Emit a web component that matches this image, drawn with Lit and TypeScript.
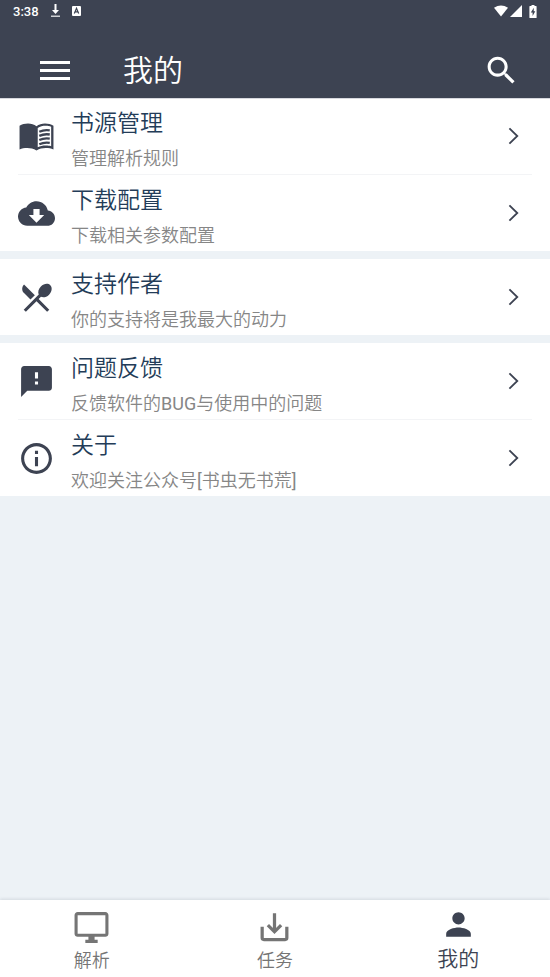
import { LitElement, html, css, svg } from "lit";
import { customElement } from "lit/decorators.js";

const icons: Record<string, unknown> = {
  book: svg`<path fill-rule="evenodd" d="M12 5.300C10.500 4 8.500 3.500 6.500 3.500C4.500 3.500 2.500 4 1 5V20.400C2.500 19.800 4 19.500 6 19.500C8.200 19.500 10 20 12 21C14 20 15.800 19.500 18 19.500C20 19.500 21.500 19.800 23 20.400V5C21.500 4 19.500 3.500 17.500 3.500C15.500 3.500 13.500 4 12 5.300ZM12.800 6.500C14.300 5.400 16 5 18 5C19.400 5 20.500 5.200 21.500 5.600V18.300C20.500 18 19.400 17.900 18 17.900C16 17.900 14.300 18.300 12.800 19Z"/><path fill="none" stroke="currentColor" stroke-width="1.500" d="M13.800 8.900Q17 7.400 20.600 8M13.800 11.600Q17 10.100 20.600 10.700M13.800 14.300Q17 12.800 20.600 13.400M13.800 17Q17 15.500 20.600 16.100"/>`,
  cloud: svg`<path d="M19.350 10.040C18.670 6.590 15.640 4 12 4 9.110 4 6.600 5.640 5.350 8.040 2.340 8.360 0 10.910 0 14c0 3.310 2.690 6 6 6h13c2.760 0 5-2.240 5-5 0-2.640-2.050-4.780-4.650-4.960zM17 13l-5 5-5-5h3V9h4v4h3z"/>`,
  dining: svg`<path d="M8.100 13.340l2.830-2.830L3.910 3.500c-1.560 1.560-1.560 4.090 0 5.660l4.190 4.180zm6.780-1.810c1.530.710 3.680.210 5.270-1.380 1.910-1.910 2.280-4.650.810-6.120-1.460-1.460-4.200-1.100-6.120.810-1.590 1.590-2.090 3.740-1.380 5.270L3.700 19.870l1.410 1.410L12 14.410l6.880 6.880 1.410-1.410L13.410 13l1.470-1.470z"/>`,
  feedback: svg`<path d="M20 2H4c-1.100 0-1.990.9-1.990 2L2 22l4-4h14c1.100 0 2-.9 2-2V4c0-1.100-.9-2-2-2zm-7 12h-2v-2h2v2zm0-4h-2V6h2v4z"/>`,
  info: svg`<path d="M11 17h2v-6h-2v6zm1-15C6.480 2 2 6.480 2 12s4.480 10 10 10 10-4.480 10-10S17.520 2 12 2zm0 18c-4.410 0-8-3.590-8-8s3.590-8 8-8 8 3.590 8 8-3.590 8-8 8zM11 9h2V7h-2v2z"/>`,
  desktop: svg`<path d="M21 2H3c-1.100 0-2 .9-2 2v12c0 1.100.9 2 2 2h7v2H8v2h8v-2h-2v-2h7c1.100 0 2-.9 2-2V4c0-1.100-.9-2-2-2zm0 14H3V4h18v12z"/>`,
  tray: svg`<path fill="none" stroke="currentColor" stroke-width="2.100" d="M12 2.800V15M7.700 10.500L12 14.800L16.300 10.500M4 11.500V18.700Q4 19.800 5.100 19.800H18.900Q20 19.800 20 18.700V11.500"/>`,
  person: svg`<path d="M12 12c2.210 0 4-1.790 4-4s-1.790-4-4-4-4 1.790-4 4 1.790 4 4 4zm0 2c-2.670 0-8 1.340-8 4v2h16v-2c0-2.660-5.330-4-8-4z"/>`,
  search: svg`<path d="M15.500 14h-.79l-.28-.27C15.410 12.590 16 11.110 16 9.500 16 5.910 13.090 3 9.500 3S3 5.910 3 9.500 5.910 16 9.500 16c1.610 0 3.090-.59 4.230-1.570l.27.280v.79l5 4.990L20.490 19l-4.990-5zm-6 0C7.010 14 5 11.990 5 9.500S7.010 5 9.500 5 14 7.010 14 9.500 11.990 14 9.500 14z"/>`,
};

const icon = (name: string) =>
  html`<svg class="icon" viewBox="0 0 24 24" aria-hidden="true">${icons[name]}</svg>`;

/* Latin runs take the regular weight, since light Roboto is paler than the light CJK face. */
const mixed = (text: string) =>
  text
    .split(/([\x21-\x7e]+)/)
    .filter(Boolean)
    .map((run) => (/^[\x21-\x7e]/.test(run) ? html`<span class="latin">${run}</span>` : run));

interface Entry {
  icon: string;
  title: string;
  note: string;
}

const groups: Entry[][] = [
  [
    { icon: "book", title: "书源管理", note: "管理解析规则" },
    { icon: "cloud", title: "下载配置", note: "下载相关参数配置" },
  ],
  [{ icon: "dining", title: "支持作者", note: "你的支持将是我最大的动力" }],
  [
    { icon: "feedback", title: "问题反馈", note: "反馈软件的BUG与使用中的问题" },
    { icon: "info", title: "关于", note: "欢迎关注公众号[书虫无书荒]" },
  ],
];

const tabs = [
  { icon: "desktop", label: "解析" },
  { icon: "tray", label: "任务" },
  { icon: "person", label: "我的", active: true },
];

@customElement("app-root")
export class AppRoot extends LitElement {
  static styles = css`
    :host {
      display: flex;
      flex-direction: column;
      min-height: 100vh;
      background: #edf2f6;
      color: #3d4352;
      font-family: Roboto, "Noto Sans CJK SC", sans-serif;
      font-weight: 350;
    }
    * {
      box-sizing: border-box;
    }
    button {
      border: 0;
      padding: 0;
      background: none;
      color: inherit;
      font: inherit;
      text-align: left;
    }
    svg {
      display: block;
      flex: none;
    }
    .icon {
      width: 37px;
      height: 37px;
      fill: currentColor;
    }
    .top {
      position: relative;
      background: #3d4352;
      box-shadow: 0 1px 0 #d7d8de;
      color: #fff;
    }
    .status {
      display: flex;
      align-items: center;
      justify-content: space-between;
      height: 22px;
      padding: 0 13px;
      font-size: 13px;
      font-weight: 500;
    }
    .side {
      display: flex;
      align-items: center;
      gap: 11px;
    }
    .signals {
      gap: 2px;
    }
    .battery {
      margin-left: 5px;
    }
    .bar {
      display: flex;
      align-items: center;
      height: 76px;
      padding: 20px 30px 0 40px;
    }
    .bar h1 {
      flex: 1;
      margin: 0 0 0 53px;
      padding-top: 2px;
      font-size: 30px;
      font-weight: inherit;
      line-height: 40px;
    }
    main {
      flex: 1;
      display: flex;
      flex-direction: column;
      gap: 8px;
    }
    .group {
      margin: 0;
      padding: 0;
      list-style: none;
      background: #fff;
    }
    .group li + li::before {
      content: "";
      display: block;
      height: 1px;
      margin: 0 18px;
      background: #f3f4f6;
    }
    .row {
      display: flex;
      align-items: center;
      gap: 16px;
      width: 100%;
      height: 76px;
      padding: 0 31px 0 18px;
    }
    .words {
      flex: 1;
      padding-top: 5px;
    }
    .title,
    .note {
      display: block;
    }
    .title {
      color: #233c58;
      font-size: 23px;
      line-height: 40px;
    }
    .note {
      color: #868686;
      font-size: 18px;
      line-height: 30px;
    }
    .latin {
      font-weight: 400;
    }
    .tabs {
      display: grid;
      grid-template-columns: repeat(3, 1fr);
      height: 77px;
      background: #fff;
      box-shadow: 0 -1px 3px rgba(60, 70, 90, 0.14);
      color: #757575;
      font-size: 18px;
      line-height: 30px;
    }
    .tab {
      display: flex;
      flex-direction: column;
      align-items: center;
      padding-top: 9px;
    }
    .active {
      padding-top: 6px;
      color: #3d4352;
      font-size: 21px;
      line-height: 32px;
    }
  `;

  render() {
    return html`
      <header class="top">
        <div class="status">
          <div class="side">
            <span>3:38</span>
            <svg width="11" height="14" viewBox="0 0 11 14" fill="#fff" aria-hidden="true">
              <path d="M4.500 0h2v6h2.500L5.500 10 2 6h2.500z" />
              <path opacity=".75" d="M1 11.500h9V13H1z" />
            </svg>
            <svg width="9" height="10" viewBox="0 0 9 10" aria-hidden="true">
              <rect width="9" height="10" rx="1" fill="#fff" />
              <path d="M2.300 7.500L4.500 2.300L6.700 7.500M3.200 5.800H5.800" fill="none" stroke="#3d4352" stroke-width="1.200" />
            </svg>
          </div>
          <div class="side signals">
            <svg width="14" height="12" viewBox="0 0 14 12" fill="#fff" aria-hidden="true">
              <path d="M0 2.800Q7-2 14 2.800L7 11.500z" />
            </svg>
            <svg width="12" height="12" viewBox="0 0 12 12" fill="#fff" aria-hidden="true">
              <path d="M12 0V12H0z" />
            </svg>
            <svg class="battery" width="8" height="13" viewBox="0 0 8 13" aria-hidden="true">
              <path fill="#fff" d="M2.500 0h3v1H7q.6 0 .6.6V12.400q0 .6-.6.6H1q-.6 0-.6-.6V1.600Q.4 1 1 1h1.500z" />
              <path fill="#3d4352" d="M4.800 2.800L1.800 7.500H3.600V11L6.300 6.300H4.700z" />
            </svg>
          </div>
        </div>
        <div class="bar">
          <button aria-label="菜单">
            <svg width="30" height="19" viewBox="0 0 30 19" fill="#fff">
              <path d="M0 0h30v3H0zM0 8h30v3H0zM0 16h30v3H0z" />
            </svg>
          </button>
          <h1>我的</h1>
          <button aria-label="搜索">${icon("search")}</button>
        </div>
      </header>
      <main>
        ${groups.map(
          (group) => html`<ul class="group">
            ${group.map(
              (entry) => html`<li>
                <button class="row">
                  ${icon(entry.icon)}
                  <span class="words">
                    <span class="title">${entry.title}</span>
                    <span class="note">${mixed(entry.note)}</span>
                  </span>
                  <svg width="11" height="18" viewBox="0 0 11 18" fill="none" stroke="#3d4352" stroke-width="1.800" aria-hidden="true">
                    <path d="M1.400 1.300L9.300 9L1.400 16.700" />
                  </svg>
                </button>
              </li>`
            )}
          </ul>`
        )}
      </main>
      <nav class="tabs">
        ${tabs.map(
          (tab) => html`<button class="tab ${tab.active ? "active" : ""}">
            ${icon(tab.icon)}<span>${tab.label}</span>
          </button>`
        )}
      </nav>
    `;
  }
}
